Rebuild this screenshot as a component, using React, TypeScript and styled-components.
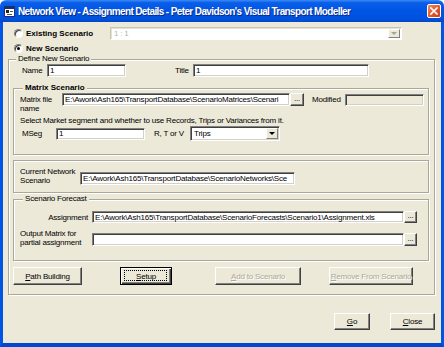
import React from 'react';
import styled, { createGlobalStyle, css } from 'styled-components';

const GlobalStyle = createGlobalStyle`
    html, body {
        margin: 0;
        padding: 0;
        background: #ffffff;
    }
    body {
        font-family: "Liberation Sans", Arial, sans-serif;
        font-size: 8px;
        letter-spacing: -0.2px;
        color: #000000;
    }
`;

const FACE = '#ECE9D8';

const Window = styled.div`
    width: 444px;
    height: 347px;
    display: flex;
    flex-direction: column;
    overflow: hidden;
`;

const TitleBar = styled.div`
    height: 22px;
    flex: 0 0 22px;
    display: flex;
    align-items: center;
    padding: 0 3px 0 4px;
    box-sizing: border-box;
    border-radius: 6px 6px 0 0;
    background: linear-gradient(
        to bottom,
        #3d8bf7 0%,
        #0a5fe8 12%,
        #0055e5 45%,
        #0052dd 85%,
        #0047c9 100%
    );
`;

const TitleText = styled.span`
    flex: 1;
    margin-left: 3px;
    color: #ffffff;
    font-weight: bold;
    font-size: 10px;
    letter-spacing: -0.62px;
    text-shadow: 1px 1px 0 #0a2a8a;
    white-space: nowrap;
`;

const CloseButton = styled.div`
    width: 14px;
    height: 14px;
    box-sizing: border-box;
    border: 1px solid #ffffff;
    border-radius: 2px;
    background: linear-gradient(135deg, #f08a62 0%, #e3582c 55%, #c9401c 100%);
    display: flex;
    align-items: center;
    justify-content: center;
`;

const Frame = styled.div`
    flex: 1;
    display: flex;
    flex-direction: column;
    background: ${FACE};
    border-left: 3px solid #0055e5;
    border-right: 3px solid #0055e5;
    border-bottom: 4px solid #0048cf;
    padding: 5px 6px 0 5px;
`;

const RadioRow = styled.div<{ $top?: number; $h: number }>`
    display: flex;
    align-items: center;
    height: ${(p) => p.$h}px;
    margin-top: ${(p) => p.$top ?? 0}px;
    padding-left: 6px;
`;

const Radio = styled.span<{ $checked?: boolean }>`
    position: relative;
    width: 9px;
    height: 9px;
    box-sizing: border-box;
    border-radius: 50%;
    background: #ffffff;
    border: 1px solid;
    border-color: #808080 #ffffff #ffffff #808080;
    box-shadow: inset 1px 1px 0 #404040;
    margin-right: 3px;
    ${(p) =>
        p.$checked &&
        css`
            &::after {
                content: '';
                position: absolute;
                left: 2px;
                top: 2px;
                width: 3px;
                height: 3px;
                border-radius: 50%;
                background: #000000;
            }
        `}
`;

const RadioLabel = styled.span<{ $w?: number }>`
    font-weight: bold;
    letter-spacing: 0;
    width: ${(p) => (p.$w ? `${p.$w}px` : 'auto')};
    white-space: nowrap;
`;

const sunken = css`
    box-sizing: border-box;
    border: 1px solid;
    border-color: #808080 #ffffff #ffffff #808080;
    box-shadow: inset 1px 1px 0 #404040, inset -1px -1px 0 #d4d0c8;
`;

const TextBox = styled.div<{ $w: number; $h?: number; $disabled?: boolean; $ml?: number; $mt?: number }>`
    ${sunken};
    width: ${(p) => p.$w}px;
    height: ${(p) => p.$h ?? 13}px;
    flex: 0 0 auto;
    margin-left: ${(p) => p.$ml ?? 0}px;
    margin-top: ${(p) => p.$mt ?? 0}px;
    background: ${(p) => (p.$disabled ? FACE : '#ffffff')};
    padding: 0 2px;
    display: flex;
    align-items: center;
    overflow: hidden;
    white-space: nowrap;
    line-height: 9px;
`;

const Combo = styled.div<{ $w: number; $h: number; $disabled?: boolean }>`
    box-sizing: border-box;
    width: ${(p) => p.$w}px;
    height: ${(p) => p.$h}px;
    flex: 0 0 auto;
    display: flex;
    align-items: center;
    background: #ffffff;
    border: 1px solid;
    border-color: ${(p) => (p.$disabled ? '#c8c5b8 #ffffff #ffffff #c8c5b8' : '#808080 #ffffff #ffffff #808080')};
    box-shadow: ${(p) => (p.$disabled ? 'inset 1px 1px 0 #e4e2d6' : 'inset 1px 1px 0 #404040, inset -1px -1px 0 #d4d0c8')};
    padding: 0 1px 0 3px;
    color: ${(p) => (p.$disabled ? '#b8b5a8' : '#000000')};
`;

const ComboText = styled.span`
    flex: 1;
    white-space: nowrap;
`;

const ComboArrow = styled.span<{ $disabled?: boolean }>`
    box-sizing: border-box;
    width: 12px;
    height: calc(100% - 2px);
    background: ${FACE};
    border: 1px solid;
    border-color: #ffffff #808080 #808080 #ffffff;
    display: flex;
    align-items: center;
    justify-content: center;
    &::after {
        content: '';
        border-left: 3px solid transparent;
        border-right: 3px solid transparent;
        border-top: 3px solid ${(p) => (p.$disabled ? '#a8a598' : '#000000')};
    }
`;

const etched = css`
    border: 1px solid #aca899;
    box-shadow: inset 1px 1px 0 #ffffff, 1px 1px 0 #ffffff;
`;

const GroupBox = styled.fieldset<{ $top?: number; $pad: string }>`
    ${etched};
    margin: ${(p) => p.$top ?? 0}px 0 0 0;
    padding: ${(p) => p.$pad};
    min-inline-size: 0;
    display: flex;
    flex-direction: column;
`;

const Legend = styled.legend<{ $bold?: boolean }>`
    margin-left: 3px;
    padding: 0 2px;
    line-height: 10px;
    font-weight: ${(p) => (p.$bold ? 'bold' : 'normal')};
    letter-spacing: ${(p) => (p.$bold ? '0' : '-0.2px')};
    background: ${FACE};
`;

const PlainBox = styled.div<{ $top?: number; $pad: string }>`
    ${etched};
    margin-top: ${(p) => p.$top ?? 0}px;
    padding: ${(p) => p.$pad};
    display: flex;
    flex-direction: column;
`;

const Row = styled.div<{ $h?: number; $top?: number; $align?: string }>`
    display: flex;
    align-items: ${(p) => p.$align ?? 'center'};
    height: ${(p) => (p.$h ? `${p.$h}px` : 'auto')};
    margin-top: ${(p) => p.$top ?? 0}px;
`;

const Label = styled.span<{ $w?: number; $ml?: number; $right?: boolean; $mt?: number }>`
    display: block;
    flex: 0 0 auto;
    width: ${(p) => (p.$w ? `${p.$w}px` : 'auto')};
    margin-left: ${(p) => p.$ml ?? 0}px;
    margin-top: ${(p) => p.$mt ?? 0}px;
    text-align: ${(p) => (p.$right ? 'right' : 'left')};
    line-height: 9px;
    white-space: nowrap;
`;

const Note = styled.div<{ $top: number }>`
    margin-top: ${(p) => p.$top}px;
    line-height: 9px;
    white-space: nowrap;
`;

const Button = styled.div<{ $w: number; $h: number; $ml?: number; $disabled?: boolean; $focused?: boolean }>`
    position: relative;
    box-sizing: border-box;
    width: ${(p) => p.$w}px;
    height: ${(p) => p.$h}px;
    flex: 0 0 auto;
    margin-left: ${(p) => p.$ml ?? 0}px;
    display: flex;
    align-items: center;
    justify-content: center;
    background: ${FACE};
    border: 1px solid;
    border-color: ${(p) => (p.$focused ? '#000000' : '#ffffff #404040 #404040 #ffffff')};
    box-shadow: ${(p) =>
        p.$focused
            ? 'inset 1px 1px 0 #ffffff, inset -1px -1px 0 #404040, inset -2px -2px 0 #808080'
            : 'inset -1px -1px 0 #808080'};
    color: ${(p) => (p.$disabled ? '#aca899' : '#000000')};
    text-shadow: ${(p) => (p.$disabled ? '1px 1px 0 #ffffff' : 'none')};
    white-space: nowrap;
    ${(p) =>
        p.$focused &&
        css`
            &::after {
                content: '';
                position: absolute;
                left: 3px;
                top: 2px;
                right: 4px;
                bottom: 3px;
                border: 1px dotted #000000;
            }
        `}
`;

const Key = styled.span`
    text-decoration: underline;
`;

const Dots = styled(Button)`
    align-items: flex-end;
    padding-bottom: 3px;
    line-height: 6px;
    font-size: 8px;
`;

const Footer = styled.div`
    display: flex;
    justify-content: flex-end;
    gap: 20px;
    margin-top: 18px;
`;

const TitleIcon = () => (
    <svg width="11" height="11" viewBox="0 0 11 11">
        <rect x="0.5" y="0.5" width="10" height="10" fill="#ffffff" stroke="#1d2e6e" />
        <rect x="1" y="1" width="9" height="2" fill="#1d2e6e" />
        <rect x="2" y="4" width="3" height="3" fill="#222222" />
        <rect x="6" y="5" width="3" height="1" fill="#555555" />
        <rect x="3" y="8" width="5" height="1" fill="#555555" />
    </svg>
);

const CloseGlyph = () => (
    <svg width="8" height="8" viewBox="0 0 8 8">
        <path d="M1 1 L7 7 M7 1 L1 7" stroke="#ffffff" strokeWidth="1.6" strokeLinecap="square" />
    </svg>
);

const App: React.FC = () => {
    return (
        <>
            <GlobalStyle />
            <Window>
                <TitleBar>
                    <TitleIcon />
                    <TitleText>Network View - Assignment Details - Peter Davidson's Visual Transport Modeller</TitleText>
                    <CloseButton>
                        <CloseGlyph />
                    </CloseButton>
                </TitleBar>
                <Frame>
                    <RadioRow $h={13}>
                        <Radio />
                        <RadioLabel $w={84}>Existing Scenario</RadioLabel>
                        <Combo $w={292} $h={13} $disabled>
                            <ComboText>1 : 1</ComboText>
                            <ComboArrow $disabled />
                        </Combo>
                    </RadioRow>
                    <RadioRow $h={10} $top={3}>
                        <Radio $checked />
                        <RadioLabel>New Scenario</RadioLabel>
                    </RadioRow>

                    <GroupBox $top={1} $pad="0 5px 9px 4px">
                        <Legend>Define New Scenario</Legend>
                        <Row $h={13}>
                            <Label $w={25} $ml={9}>Name</Label>
                            <TextBox $w={79}>1</TextBox>
                            <Label $w={18} $ml={49}>Title</Label>
                            <TextBox $w={176}>1</TextBox>
                        </Row>

                        <GroupBox $top={6} $pad="0 4px 13px 6px">
                            <Legend $bold>Matrix Scenario</Legend>
                            <Row $align="flex-start">
                                <Label $w={42} $mt={2}>
                                    Matrix file
                                    <br />
                                    name
                                </Label>
                                <TextBox $w={228}>E:\Awork\Ash165\TransportDatabase\ScenarioMatrices\Scenari</TextBox>
                                <Dots $w={14} $h={13}>...</Dots>
                                <Label $ml={8} $w={33} $mt={2}>Modified</Label>
                                <TextBox $w={79} $h={12} $mt={1} $disabled />
                            </Row>
                            <Note $top={3}>Select Market segment and whether to use Records, Trips or Variances from it.</Note>
                            <Row $h={15} $top={1}>
                                <Label $w={34} $ml={2}>MSeg</Label>
                                <TextBox $w={89} $h={12}>1</TextBox>
                                <Label $w={36} $ml={9}>R, T or V</Label>
                                <Combo $w={90} $h={15}>
                                    <ComboText>Trips</ComboText>
                                    <ComboArrow />
                                </Combo>
                            </Row>
                        </GroupBox>

                        <PlainBox $top={5} $pad="6px 4px 7px 6px">
                            <Row $align="flex-end">
                                <Label $w={60}>
                                    Current Network
                                    <br />
                                    Scenario
                                </Label>
                                <TextBox $w={215}>E:\Awork\Ash165\TransportDatabase\ScenarioNetworks\Sce</TextBox>
                            </Row>
                        </PlainBox>

                        <GroupBox $top={1} $pad="0 4px 13px 6px">
                            <Legend>Scenario Forecast</Legend>
                            <Row $h={12} $top={7}>
                                <Label $w={68} $right>Assignment</Label>
                                <TextBox $w={312} $ml={4} $h={12}>
                                    E:\Awork\Ash165\TransportDatabase\ScenarioForecasts\Scenario1\Assignment.xls
                                </TextBox>
                                <Dots $w={13} $h={12}>...</Dots>
                            </Row>
                            <Row $top={6} $align="flex-start">
                                <Label $w={72}>
                                    Output Matrix for
                                    <br />
                                    partial assignment
                                </Label>
                                <TextBox $w={312} $mt={4} />
                                <Dots $w={13} $h={13} style={{ marginTop: 4 }}>...</Dots>
                            </Row>
                        </GroupBox>

                        <Row $top={6}>
                            <Button $w={69} $h={18}>
                                <span><Key>P</Key>ath Building</span>
                            </Button>
                            <Button $w={52} $h={18} $ml={38} $focused>
                                <span><Key>S</Key>etup</span>
                            </Button>
                            <Button $w={86} $h={18} $ml={43} $disabled>
                                <span><Key>A</Key>dd to Scenario</span>
                            </Button>
                            <Button $w={84} $h={18} $ml={28} $disabled>
                                <span><Key>R</Key>emove From Scenario</span>
                            </Button>
                        </Row>
                    </GroupBox>

                    <Footer>
                        <Button $w={36} $h={17}>
                            <span><Key>G</Key>o</span>
                        </Button>
                        <Button $w={45} $h={17}>
                            <span><Key>C</Key>lose</span>
                        </Button>
                    </Footer>
                </Frame>
            </Window>
        </>
    );
};

export default App;
